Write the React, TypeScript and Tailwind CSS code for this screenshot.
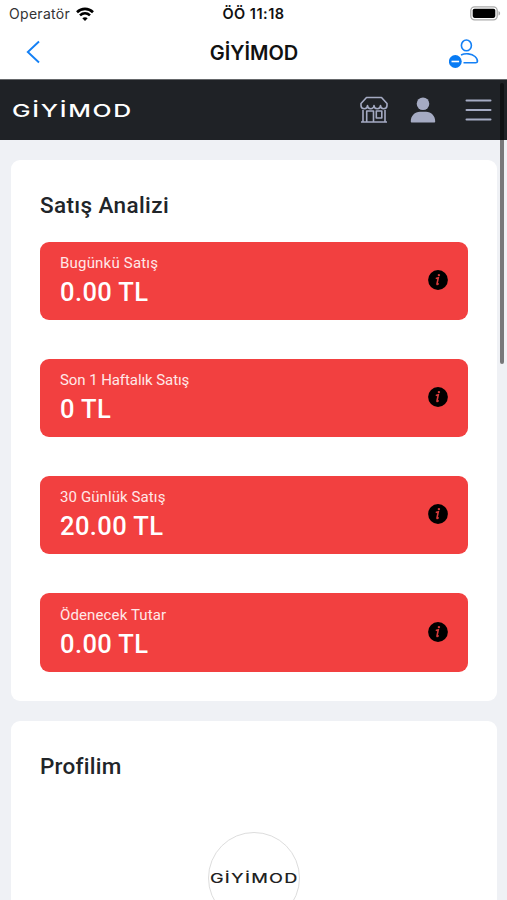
import React from 'react';

const stats = [
  { label: 'Bugünkü Satış', value: '0.00 TL', tracking: 'tracking-[0.2px]' },
  { label: 'Son 1 Haftalık Satış', value: '0 TL', tracking: 'tracking-[-0.08px]' },
  { label: '30 Günlük Satış', value: '20.00 TL', tracking: 'tracking-[0.1px]' },
  { label: 'Ödenecek Tutar', value: '0.00 TL', tracking: 'tracking-[0.13px]' },
];

const Wordmark: React.FC<{ className: string }> = ({ className }) => (
  <svg viewBox="0 0 120 20" className={className} fill="currentColor">
    <g transform="scale(1.42 1)">
      <text
        x="0"
        y="17"
        fontSize="17.5"
        fontWeight="500"
        textLength="84"
        lengthAdjust="spacing"
        className="font-['Inter',sans-serif]"
      >
        GİYİMOD
      </text>
    </g>
  </svg>
);

const StatusBar: React.FC = () => (
  <div className="grid h-[27px] grid-cols-3 items-center pr-[6px] pl-[9px] text-[14px]">
    <div className="flex items-center gap-[6px] text-[#333]">
      <span className="tracking-[0.3px]">Operatör</span>
      <svg viewBox="0 0 18 14" className="h-[14px] w-[18px]" fill="none" stroke="#000" strokeWidth="2.6">
        <path d="M1 5.2C5.6.8 12.4.8 17 5.2" />
        <path d="M4 8.4c2.9-2.7 7.1-2.7 10 0" />
        <path d="M9 14 6.3 11.2c1.5-1.3 3.9-1.3 5.4 0z" fill="#000" stroke="none" />
      </svg>
    </div>
    <span className="pr-[3px] text-center text-[14.5px] font-semibold tracking-[0.5px] text-[#111]">ÖÖ 11:18</span>
    <svg viewBox="0 0 31 15" className="h-[15px] w-[31px] justify-self-end">
      <rect x=".8" y=".8" width="26.4" height="13" rx="3.8" fill="#fff" stroke="#aaa" strokeWidth="1.3" />
      <rect x="2.7" y="2.7" width="22.6" height="9.2" rx="1.8" />
      <path d="M28.5 5v4.6c2.2-.8 2.2-3.8 0-4.6z" fill="#aaa" />
    </svg>
  </div>
);

const NavBar: React.FC = () => (
  <div className="grid h-[52px] grid-cols-3 items-center px-[27px]">
    <svg viewBox="0 0 14 24" className="-mt-[2px] -ml-px h-[24px] w-[14px]" fill="none" stroke="#1480f5" strokeWidth="1.9">
      <path d="M13 1.5 1.8 12 13 22.5" />
    </svg>
    <span className="pl-px text-center text-[20px] font-semibold text-[#111]">GİYİMOD</span>
    <svg viewBox="0 0 30 30" className="mr-px h-[30px] w-[30px] justify-self-end" fill="none" stroke="#1480f5" strokeWidth="1.6">
      <ellipse cx="17.4" cy="7.4" rx="5" ry="5.4" />
      <path d="M12 17c4.4-2 10.6-1.5 14 1.5 2 1.8 2.7 3.6 2.4 5.2-.1.9-.7 1.1-1.7 1.1H14.5" />
      <circle cx="6.3" cy="23.5" r="6.4" fill="#087bf4" stroke="none" />
      <path d="M2.5 23.5h7.6" stroke="#fff" />
    </svg>
  </div>
);

const SiteHeader: React.FC = () => (
  <header className="flex h-[61px] items-center justify-between border-t border-[#66686b] bg-[#1f2226] pr-[15px] pl-[12px]">
    <Wordmark className="h-[20px] w-[120px] text-white" />
    <div className="flex items-center text-[#a5abc3]">
      <svg viewBox="0 0 28 28" className="h-[28px] w-[28px]" fill="none" stroke="currentColor" strokeWidth="1.6" strokeLinejoin="round">
        <path d="M6.5 1.5h15L27 7.5v2a3.25 3.25 0 0 1-6.5 0 3.25 3.25 0 0 1-6.5 0 3.25 3.25 0 0 1-6.5 0A3.25 3.25 0 0 1 1 9.500v-2z" />
        <path d="M3 14v12M25 14v12M1 26h26M6.7 26V15h6.8v11M16.3 15h5.5v7h-5.5z" />
      </svg>
      <svg viewBox="0 0 26 26" className="ml-[22px] h-[26px] w-[26px]" fill="currentColor">
        <circle cx="13" cy="6.8" r="6.3" />
        <path d="M.8 24.5C.6 19 5 14.8 10 14.8h6c5 0 9.4 4.2 9.2 9.700 0 .6-.4 1-1 1H1.8c-.6 0-1-.4-1-1z" />
      </svg>
      <svg viewBox="0 0 27 24" className="ml-[29px] h-[24px] w-[27px]" stroke="currentColor" strokeWidth="2" strokeLinecap="round">
        <path d="M1.5 2.5h24M1.5 12h24M1.5 21.5h24" />
      </svg>
    </div>
  </header>
);

const InfoIcon: React.FC = () => (
  <svg viewBox="0 0 20 20" className="-mt-[2px] h-[20px] w-[20px]">
    <circle cx="10" cy="10" r="9.9" />
    <path
      d="M8.400 8.300c.8-.3 1.300-.5 1.900-.6L9 13.800c-.1.900.5.700 1.200.1"
      stroke="#d83b3b"
      fill="none"
      strokeWidth="1.6"
      strokeLinecap="round"
    />
    <circle cx="10.9" cy="5.1" r="1.2" fill="#d83b3b" />
  </svg>
);

export default function App() {
  return (
    <div className="relative h-[900px] w-[507px] overflow-hidden bg-[#eff1f5] font-['Roboto',sans-serif]">
      <div className="bg-white font-['Inter',sans-serif]">
        <StatusBar />
        <NavBar />
      </div>
      <SiteHeader />

      <main className="flex flex-col gap-[20px] pt-[20px] pr-[10px] pl-[11px]">
        <section className="h-[541px] rounded-[9px] bg-white px-[29px] pt-[29px]">
          <h2 className="text-[22.5px] leading-[32px] font-medium tracking-[0.37px] text-[#212529]">Satış Analizi</h2>
          <div className="mt-[20.5px] flex flex-col gap-[39px]">
            {stats.map((item) => (
              <div
                key={item.label}
                className="flex h-[78.3px] items-center justify-between rounded-[9px] bg-[#f24040] px-[20px] text-white"
              >
                <div>
                  <div className={`text-[15px] leading-[22px] text-[#ffe8e8] ${item.tracking}`}>{item.label}</div>
                  <div className="text-[25.5px] leading-[36px] font-medium tracking-[0.4px]">{item.value}</div>
                </div>
                <InfoIcon />
              </div>
            ))}
          </div>
        </section>

        <section className="h-[240px] rounded-t-[9px] bg-white px-[29px] pt-[29px]">
          <h2 className="text-[22.5px] leading-[32px] font-medium tracking-[0.25px] text-[#212529]">Profilim</h2>
          <div className="mx-auto mt-[50px] flex h-[92px] w-[92px] items-center justify-center rounded-full border border-[#ddd]">
            <Wordmark className="-mt-[2px] h-[15px] w-[88px] shrink-0 text-[#222]" />
          </div>
        </section>
      </main>

      {/* scroll indicator */}
      <div className="absolute top-[83px] right-[3px] h-[281px] w-[4px] rounded-full bg-black/50" />
    </div>
  );
}
